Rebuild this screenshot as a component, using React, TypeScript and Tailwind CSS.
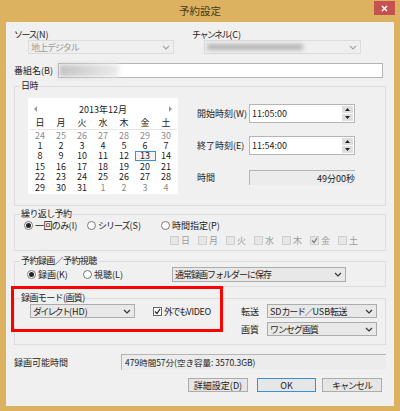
import React from "react";

const Chevron = ({ c = "#333" }: { c?: string }) => (
  <svg width="8" height="5" viewBox="0 0 8 5" className="shrink-0">
    <path d="M1 1l3 3 3-3" fill="none" stroke={c} strokeWidth="1.2" />
  </svg>
);

const Select = ({ text, className, disabled }: { text?: React.ReactNode; className: string; disabled?: boolean }) => (
  <div
    className={
      "flex items-center justify-between pl-[2px] pr-[3px] border text-[9px] leading-none whitespace-nowrap " +
      (disabled ? "border-[#dcdcdc] bg-[#efefef] text-[#9a9a9a] " : "border-[#acacac] bg-[#e8e8e8] text-[#222] ") +
      className
    }
  >
    <span>{text}</span>
    <Chevron c={disabled ? "#a5a5a5" : "#333"} />
  </div>
);

const Group = ({ title, className, children }: { title: React.ReactNode; className: string; children?: React.ReactNode }) => (
  <div className={"relative border border-[#dcdcdc] w-[372px] " + className}>
    <span className="absolute left-[5px] top-[-7px] bg-[#f0f0f0] px-[1px] text-[9px] leading-[12px] text-[#222] whitespace-nowrap tracking-[-0.6px]">{title}</span>
    {children}
  </div>
);

const Radio = ({ on, label, className = "" }: { on?: boolean; label: React.ReactNode; className?: string }) => (
  <div className={"flex items-center gap-[2px] text-[9px] leading-none text-[#222] whitespace-nowrap " + className}>
    <span className="w-[9px] h-[9px] rounded-full border border-[#777] bg-white flex items-center justify-center shrink-0">
      {on && <span className="w-[5px] h-[5px] rounded-full bg-[#222]" />}
    </span>
    <span>{label}</span>
  </div>
);

const Check = ({ on, label, disabled, className = "" }: { on?: boolean; label: React.ReactNode; disabled?: boolean; className?: string }) => (
  <div className={"flex items-center gap-[2px] text-[9px] leading-none whitespace-nowrap " + (disabled ? "text-[#9a9a9a] " : "text-[#222] ") + className}>
    <span className={"w-[9px] h-[9px] border flex items-center justify-center shrink-0 " + (disabled ? "border-[#cfcfcf] bg-[#e6e6e6]" : "border-[#666] bg-white")}>
      {on && (
        <svg width="7" height="7" viewBox="0 0 7 7">
          <path d="M1 3.5l2 2 3-4.5" fill="none" stroke={disabled ? "#777" : "#222"} strokeWidth="1.2" />
        </svg>
      )}
    </span>
    <span>{label}</span>
  </div>
);

const Spin = ({ value }: { value: string }) => (
  <div className="w-[106px] h-[19px] border border-[#b5b5b5] bg-white flex items-center justify-between pl-[2px] pr-[1px] text-[9px] leading-none text-[#222]">
    {value}
    <div className="flex flex-col gap-[1px]">
      {[0, 1].map((i) => (
        <span key={i} className="w-[11px] h-[7px] bg-[#dedede] flex items-center justify-center">
          <svg width="5" height="3" viewBox="0 0 5 3">
            <path d={i === 0 ? "M2.5 0L5 3H0z" : "M0 0h5L2.5 3z"} fill="#222" />
          </svg>
        </span>
      ))}
    </div>
  </div>
);

const weeks = [
  ["24", "25", "26", "27", "28", "29", "30"],
  ["1", "2", "3", "4", "5", "6", "7"],
  ["8", "9", "10", "11", "12", "13", "14"],
  ["15", "16", "17", "18", "19", "20", "21"],
  ["22", "23", "24", "25", "26", "27", "28"],
  ["29", "30", "31", "1", "2", "3", "4"],
];

const Calendar = () => (
  <div className="w-[150px] h-[96px] bg-white flex flex-col px-[1.5px] text-[9px] leading-none text-[#222] shrink-0">
    <div className="h-[12px] mt-[5px] flex items-center justify-between px-[4px]">
      <span className="w-0 h-0 border-y-[3px] border-y-transparent border-r-[3px] border-r-[#999]" />
      <span>2013年12月</span>
      <span className="w-0 h-0 border-y-[3px] border-y-transparent border-l-[3px] border-l-[#999]" />
    </div>
    <div className="grid grid-cols-7 h-[14px] mt-[1px] pt-[2px] border-b border-[#e6e6e6] text-center">
      {["日", "月", "火", "水", "木", "金", "土"].map((d) => (
        <span key={d}>{d}</span>
      ))}
    </div>
    <div className="grid grid-cols-7 auto-rows-[10.4px] text-center">
      {weeks.flatMap((w, r) =>
        w.map((d, i) => {
          const gray = r === 0 || (r === 5 && i > 2);
          const sel = r === 2 && d === "13";
          return (
            <span key={r + "-" + i} className={"flex items-center justify-center " + (gray ? "text-[#8c8c8c] " : "") + (sel ? "border border-[#3a8fd8] bg-[#f3f3f3]" : "")}>
              {d}
            </span>
          );
        })
      )}
    </div>
  </div>
);

const Btn = ({ label, className = "" }: { label: React.ReactNode; className?: string }) => (
  <div className={"h-[14px] border flex items-center justify-center text-[9px] leading-none text-[#222] whitespace-nowrap " + className}>
    {label}
  </div>
);

const Blur = ({ className }: { className: string }) => <div className={"blur-[2px] " + className} />;

export default function App() {
  return (
    <div className="relative w-[400px] h-[411px] bg-[#dcb260] flex flex-col overflow-hidden" style={{ fontFamily: '"Noto Sans CJK JP", "Liberation Sans", sans-serif' }}>
      <div className="h-[22px] shrink-0 flex items-center justify-center text-[10.5px] leading-none text-[#4a3a1a]">予約設定</div>
      <div className="absolute right-[5px] top-[1px] w-[21px] h-[14px] bg-[#c75050] flex items-center justify-center">
        <svg width="7" height="7" viewBox="0 0 7 7">
          <path d="M1 1l5 5M6 1l-5 5" stroke="#fff" strokeWidth="1.5" />
        </svg>
      </div>

      <div className="mx-[6px] h-[384px] bg-[#f0f0f0] pl-[8px] flex flex-col">
        <div className="flex mt-[7px]">
          <div className="w-[178px]">
            <div className="text-[9px] leading-[11px] text-[#222]"><span className="tracking-[-1.5px]">ソース</span>(N)</div>
            <Select disabled text={<span className="tracking-[-1px]">地上デジタル</span>} className="w-[146px] h-[14px] ml-[14px]" />
          </div>
          <div>
            <div className="text-[9px] leading-[11px] text-[#222]"><span className="tracking-[-1.5px]">チャンネル</span>(C)</div>
            <Select disabled text={<Blur className="w-[96px] h-[6px] bg-[#b5b5b5]" />} className="w-[157px] h-[14px] ml-[12px]" />
          </div>
        </div>

        <div className="flex items-center mt-[9px] h-[15px]">
          <span className="w-[44px] text-[9px] leading-none text-[#222] whitespace-nowrap">番組名(B)</span>
          <div className="w-[325px] h-[15px] border border-[#b5b5b5] bg-white flex items-center">
            <Blur className="w-[60px] h-[13px] bg-gradient-to-r from-[#c4c4c4] to-[#ececec]" />
          </div>
        </div>

        <Group title="日時" className="h-[120px] mt-[8px] flex pl-[13px] pt-[11px]">
          <Calendar />
          <div className="ml-[19px] flex flex-col pt-[6px]">
            <div className="flex items-center justify-between w-[158px] h-[19px] text-[9px] leading-none text-[#222] whitespace-nowrap">
              開始時刻(W)
              <Spin value="11:05:00" />
            </div>
            <div className="flex items-center justify-between w-[158px] h-[19px] mt-[13px] text-[9px] leading-none text-[#222] whitespace-nowrap">
              終了時刻(E)
              <Spin value="11:54:00" />
            </div>
            <div className="flex items-center justify-between w-[158px] h-[15px] mt-[15px] text-[9px] leading-none text-[#222]">
              時間
              <div className="w-[106px] h-[15px] border-l border-t border-[#b5b5b5] bg-[#ececec] flex items-center justify-end text-[9px]">49分00秒</div>
            </div>
          </div>
        </Group>

        <Group title="繰り返し予約" className="h-[37px] mt-[8px] pl-[9px] pt-[5px]">
          <div className="flex h-[10px]">
            <Radio on label={<><span className="tracking-[-0.6px]">一回のみ</span>(I)</>} className="w-[63px]" />
            <Radio label={<><span className="tracking-[-1px]">シリーズ</span>(S)</>} className="w-[74px]" />
            <Radio label="時間指定(P)" />
          </div>
          <div className="flex mt-[5px] ml-[146px] h-[10px]">
            <Check disabled label="日" className="w-[28px]" />
            <Check disabled label="月" className="w-[28px]" />
            <Check disabled label="火" className="w-[28px]" />
            <Check disabled label="水" className="w-[28px]" />
            <Check disabled label="木" className="w-[28px]" />
            <Check disabled on label="金" className="w-[28px]" />
            <Check disabled label="土" className="w-[28px]" />
          </div>
        </Group>

        <Group title="予約録画／予約視聴" className="h-[26px] mt-[10px] pl-[12px] flex items-center">
          <Radio on label="録画(K)" className="w-[56px]" />
          <Radio label="視聴(L)" className="w-[89px]" />
          <Select text={<span className="tracking-[-1px]">通常録画フォルダーに保存</span>} className="w-[174px] h-[15px]" />
        </Group>

        <Group title="録画モード(画質)" className="h-[47px] mt-[11px] flex pl-[15px] pt-[5px]">
          <Select text={<><span className="tracking-[-1.8px]">ダイレクト</span>(HD)</>} className="w-[105px] h-[14px]" />
          <div className="ml-[18px] w-[88px] h-[14px] flex items-center">
            <Check on label={<><span className="tracking-[-1.5px]">外でも</span><span className="tracking-[-0.3px]">VIDEO</span></>} />
          </div>
          <div className="flex flex-col gap-[4px]">
            <div className="flex items-center text-[9px] leading-none text-[#222]">
              <span className="w-[26px]">転送</span>
              <Select text={<><span>SD</span><span className="tracking-[-1.3px]">カード／</span><span>USB</span><span className="tracking-[-0.5px]">転送</span></>} className="w-[110px] h-[14px]" />
            </div>
            <div className="flex items-center text-[9px] leading-none text-[#222]">
              <span className="w-[26px]">画質</span>
              <Select text={<span className="tracking-[-1px]">ワンセグ画質</span>} className="w-[110px] h-[14px]" />
            </div>
          </div>
        </Group>

        <div className="flex items-center mt-[9px] h-[16px]">
          <span className="w-[107px] text-[9px] leading-none text-[#222] whitespace-nowrap">録画可能時間</span>
          <div className="w-[265px] h-[16px] border-l border-t border-[#b5b5b5] bg-[#ececec] flex items-center pl-[3px] text-[8.5px] leading-none text-[#222] whitespace-nowrap">
            479時間57分(空き容量: 3570.3GB)
          </div>
        </div>

        <div className="flex mt-[8px] ml-[174px]">
          <Btn label="詳細設定(D)" className="w-[60px] border-[#acacac] bg-[#e6e6e6]" />
          <Btn label="OK" className="w-[59px] ml-[9px] border-[#3a8fd8] bg-[#e6e6e6]" />
          <Btn label="キャンセル" className="w-[60px] ml-[6px] border-[#acacac] bg-[#e6e6e6] tracking-[-1px]" />
        </div>
      </div>

      <div className="absolute left-[11px] top-[286px] w-[212px] h-[46px] border-[3px] border-[#ff0000]" />
    </div>
  );
}
